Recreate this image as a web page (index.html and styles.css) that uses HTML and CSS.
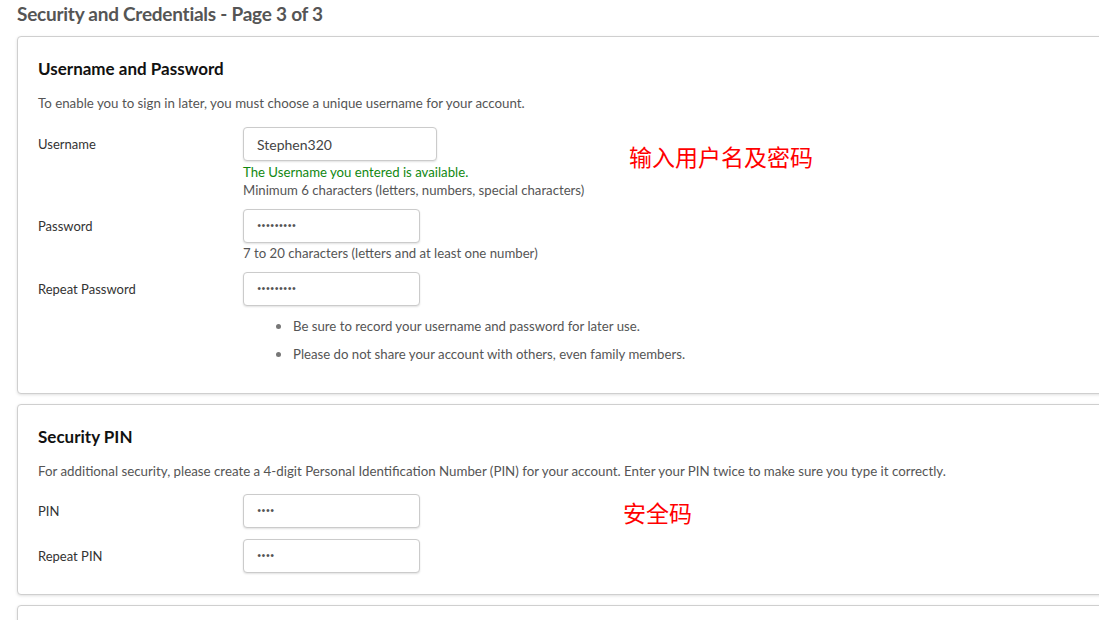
FILE: index.html
```html
<!DOCTYPE html>
<html lang="en">
<head>
<meta charset="utf-8">
<title>Security and Credentials</title>
<link rel="stylesheet" href="styles.css">
</head>
<body>
<div class="page">
  <h1 class="page-title">Security and Credentials - Page 3 of 3</h1>

  <section class="card">
    <h2 class="card-title">Username and Password</h2>
    <p class="card-desc">To enable you to sign in later, you must choose a unique username for your account.</p>

    <div class="row">
      <label class="label" for="username">Username</label>
      <div class="field">
        <input class="input input-wide" id="username" type="text" value="Stephen320">
        <div class="help help-ok">The Username you entered is available.</div>
        <div class="help">Minimum 6 characters (letters, numbers, special characters)</div>
      </div>
    </div>

    <div class="row">
      <label class="label" for="password">Password</label>
      <div class="field">
        <div class="input input-mask" id="password">•••••••••</div>
        <div class="help help-after">7 to 20 characters (letters and at least one number)</div>
      </div>
    </div>

    <div class="row row-last">
      <label class="label" for="password2">Repeat Password</label>
      <div class="field">
        <div class="input input-mask" id="password2">•••••••••</div>
      </div>
    </div>

    <ul class="notes">
      <li>Be sure to record your username and password for later use.</li>
      <li>Please do not share your account with others, even family members.</li>
    </ul>

    <div class="annotation annotation-1">输入用户名及密码</div>
  </section>

  <section class="card card-pin">
    <h2 class="card-title">Security PIN</h2>
    <p class="card-desc card-desc-pin">For additional security, please create a 4-digit Personal Identification Number (PIN) for your account. Enter your PIN twice to make sure you type it correctly.</p>

    <div class="row row-pin">
      <label class="label" for="pin">PIN</label>
      <div class="field">
        <div class="input input-mask" id="pin">••••</div>
      </div>
    </div>

    <div class="row row-pin row-last">
      <label class="label" for="pin2">Repeat PIN</label>
      <div class="field">
        <div class="input input-mask" id="pin2">••••</div>
      </div>
    </div>

    <div class="annotation annotation-2">安全码</div>
  </section>

  <section class="card card-stub"></section>
</div>
</body>
</html>
```

FILE: styles.css
```css
html, body {
  margin: 0;
  padding: 0;
  background: #fff;
  overflow: hidden;
}

body {
  font-family: Lato, "Liberation Sans", sans-serif;
  color: #333;
}

.page {
  padding: 0 0 0 17px;
}

.page-title {
  margin: 0;
  padding-top: 2px;
  height: 36px;
  box-sizing: border-box;
  font-size: 19px;
  line-height: 24px;
  font-weight: 700;
  letter-spacing: -0.25px;
  color: #555;
}

.card {
  position: relative;
  box-sizing: border-box;
  width: calc(100% + 30px);
  border: 1px solid #cfcfcf;
  border-radius: 4px;
  box-shadow: 0 1px 3px rgba(0, 0, 0, 0.12);
  padding: 20px;
  margin: 0 0 10px;
  background: #fff;
}

.card-pin {
  padding-bottom: 21px;
}

.card-title {
  margin: 0;
  font-size: 17px;
  line-height: 24px;
  font-weight: 700;
  color: #111;
}

.card-desc {
  margin: 13px 0 15px;
  font-size: 13.3px;
  line-height: 18px;
  color: #555;
}

.card-desc-pin {
  margin-bottom: 14px;
}

.row {
  display: grid;
  grid-template-columns: 205px 1fr;
  margin-bottom: 10px;
}

.row-pin {
  margin-bottom: 11px;
}

.row-last {
  margin-bottom: 0;
}

.label {
  font-size: 13px;
  line-height: 34px;
  color: #333;
}

.field {
  display: flex;
  flex-direction: column;
  align-items: flex-start;
}

.input {
  box-sizing: border-box;
  width: 177px;
  height: 34px;
  margin: 0;
  padding: 0 13px;
  border: 1px solid #cbcbcb;
  border-radius: 4px;
  box-shadow: 0 1px 2px rgba(0, 0, 0, 0.12);
  background: #fff;
  font-family: Lato, "Liberation Sans", sans-serif;
  font-size: 14px;
  line-height: 32px;
  color: #444;
  outline: none;
}

.input-wide {
  width: 194px;
}

.input-mask {
  font-size: 7.5px;
  letter-spacing: 0;
  color: #555;
}

.help {
  font-size: 13.2px;
  line-height: 18px;
  color: #555;
}

.help-ok {
  margin-top: 2px;
  color: #118811;
}

.help-after {
  margin-top: 1px;
}

.notes {
  list-style: none;
  margin: 11px 0 0;
  padding: 0 0 0 238px;
  font-size: 13.2px;
  line-height: 18px;
  color: #555;
}

.notes li {
  display: flex;
  align-items: center;
  margin-bottom: 10px;
}

.notes li::before {
  content: "";
  flex: none;
  width: 5px;
  height: 5px;
  border-radius: 50%;
  background: #777;
  margin-right: 12px;
}

.notes li:last-child {
  margin-bottom: 10px;
}

.annotation {
  position: absolute;
  font-family: "Noto Sans CJK SC", sans-serif;
  font-size: 23px;
  line-height: 24px;
  color: #ff0000;
}

.annotation-1 {
  left: 611px;
  top: 107px;
}

.annotation-2 {
  left: 605px;
  top: 95px;
}

.card-stub {
  height: 40px;
}
```
